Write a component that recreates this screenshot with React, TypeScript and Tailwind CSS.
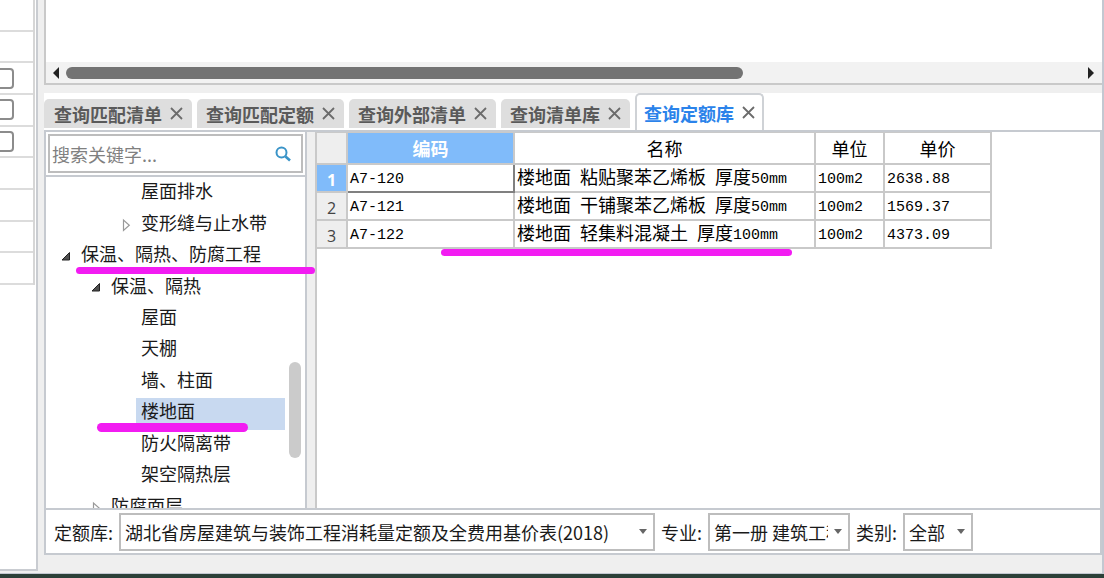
import { useState } from "react";
import clsx from "clsx";

interface TreeNode {
  label: string;
  level: 0 | 1 | 2;
  state?: "open" | "closed";
}

interface QuotaRow {
  code: string;
  name: string;
  unit: string;
  price: string;
}

const TABS = ["查询匹配清单", "查询匹配定额", "查询外部清单", "查询清单库", "查询定额库"];

const TREE: TreeNode[] = [
  { label: "屋面排水", level: 2 },
  { label: "变形缝与止水带", level: 2, state: "closed" },
  { label: "保温、隔热、防腐工程", level: 0, state: "open" },
  { label: "保温、隔热", level: 1, state: "open" },
  { label: "屋面", level: 2 },
  { label: "天棚", level: 2 },
  { label: "墙、柱面", level: 2 },
  { label: "楼地面", level: 2 },
  { label: "防火隔离带", level: 2 },
  { label: "架空隔热层", level: 2 },
  { label: "防腐面层", level: 1, state: "closed" },
];

const ROWS: QuotaRow[] = [
  { code: "A7-120", name: "楼地面 粘贴聚苯乙烯板 厚度50mm", unit: "100m2", price: "2638.88" },
  { code: "A7-121", name: "楼地面 干铺聚苯乙烯板 厚度50mm", unit: "100m2", price: "1569.37" },
  { code: "A7-122", name: "楼地面 轻集料混凝土 厚度100mm", unit: "100m2", price: "4373.09" },
];

const INDENT = { 0: "pl-[14px]", 1: "pl-[44px]", 2: "pl-[74px]" };

// Latin runs are set in a half-width face, so two of them take one Chinese cell
function GridText({ text }: { text: string }) {
  return (
    <>
      {text.split(/([\x20-\x7e]+)/).map((part, i) =>
        i % 2 === 1 ? (
          <span key={i} className="align-middle font-['Liberation_Mono',monospace] text-[15px] leading-none">
            {part}
          </span>
        ) : (
          part
        ),
      )}
    </>
  );
}

function CloseIcon() {
  return (
    <svg viewBox="0 0 13 13" className="h-[13px] w-[13px]" fill="none" stroke="#6b6b6b" strokeWidth="1.8">
      <path d="M1 1 12 12M12 1 1 12" />
    </svg>
  );
}

function TreeArrow({ state }: { state?: "open" | "closed" }) {
  return (
    <svg viewBox="0 0 12 14" className="h-[14px] w-3 shrink-0">
      {state === "open" && <path d="M9.5 2.5V10H2z" fill="#505050" stroke="#222" strokeWidth="1" />}
      {state === "closed" && <path d="M3.5 2v10.5L9.3 7.2z" fill="#fff" stroke="#999" strokeWidth="1.2" />}
    </svg>
  );
}

function Sidebar() {
  return (
    <aside className="mb-[2px] w-[38px] shrink-0 border-b-2 border-r-2 border-[#c9ccd1] bg-white">
      <div className="grid h-[285px] w-[35px] grid-rows-9 border-r-2 border-[#d6d6d6]">
        {Array.from({ length: 9 }, (_, i) => (
          <div key={i} className="flex items-center overflow-hidden border-b-2 border-[#dcdcdc]">
            {i >= 2 && i <= 4 && (
              <input
                type="checkbox"
                aria-label={`第${i + 1}行`}
                className="-ml-2 h-[21px] w-[22px] shrink-0 appearance-none rounded border-2 border-[#8c8c8c] bg-white"
              />
            )}
          </div>
        ))}
      </div>
    </aside>
  );
}

function TopGrid() {
  return (
    <section className="flex h-[85px] shrink-0 flex-col justify-end border-b-2 border-l-2 border-[#c9c9c9] bg-white">
      <div className="flex h-[21px] items-center gap-[7px] bg-[#f2f2f2] pl-[7px] pr-2">
        <svg viewBox="0 0 6 12" className="h-3 w-[6px]">
          <path d="M6 0v12L0 6z" fill="#222" />
        </svg>
        <div className="flex-1">
          <div className="h-3 w-2/3 rounded-full bg-[#737373]" />
        </div>
        <svg viewBox="0 0 6 12" className="h-3 w-[6px]">
          <path d="M0 0v12l6-6z" fill="#222" />
        </svg>
      </div>
    </section>
  );
}

function TabStrip({ active, onChange }: { active: number; onChange: (i: number) => void }) {
  return (
    <div role="tablist" className="flex h-[37px] shrink-0 items-end gap-[5px] bg-white">
      {TABS.map((tab, i) => (
        <button
          key={tab}
          type="button"
          role="tab"
          aria-selected={i === active}
          onClick={() => onChange(i)}
          className={clsx(
            "flex items-center gap-2 whitespace-nowrap rounded-t-[5px] font-bold first:pl-[10px]",
            i === active
              ? "h-[37px] border-2 border-b-0 border-[#cfd2d6] bg-white px-[7px] text-[#2b83ea]"
              : "mb-[2px] h-[29px] bg-[#dedede] px-[9px] text-[#5a5a5a]",
          )}
        >
          {tab}
          <CloseIcon />
        </button>
      ))}
    </div>
  );
}

function CategoryTree() {
  const [selected, setSelected] = useState("楼地面");

  return (
    <div className="flex w-[261px] shrink-0 flex-col border-r-2 border-[#c6cad0] bg-white">
      <div className="shrink-0 border-b-2 border-[#c6cad0] p-[2px]">
        <div className="flex h-[39px] items-center border-2 border-[#bdbdbd] pl-[2px] pr-[10px]">
          <input
            type="text"
            aria-label="搜索关键字"
            placeholder="搜索关键字..."
            className="min-w-0 flex-1 bg-transparent outline-none placeholder:text-[#808080]"
          />
          <svg viewBox="0 0 16 16" className="h-4 w-4" fill="none" stroke="#3a94c8">
            <circle cx="6.5" cy="6.5" r="5" strokeWidth="2" />
            <path d="M10.5 10.5 15 14.5" strokeWidth="2.6" />
          </svg>
        </div>
      </div>
      <div className="flex min-h-0 flex-1 overflow-hidden pt-px">
        <ul className="grid h-[346px] flex-1 grid-rows-11">
          {TREE.map((node) => (
            <li key={node.label} className={clsx("flex items-center", INDENT[node.level])}>
              <TreeArrow state={node.state} />
              <button
                type="button"
                onClick={() => setSelected(node.label)}
                className={clsx(
                  "ml-1 flex h-full flex-1 items-center whitespace-nowrap pb-[7px] pl-[5px]",
                  selected === node.label && "bg-[#c8d9f0]",
                )}
              >
                {node.label}
              </button>
            </li>
          ))}
        </ul>
        <div className="flex w-5 shrink-0 justify-center">
          <div className="mt-[184px] h-24 w-3 rounded-full bg-[#cbcbcb]" />
        </div>
      </div>
    </div>
  );
}

function QuotaTable() {
  const line = "border-2 border-[#c9c9c9]";
  const cell = "border-2 border-[#c9c9c9] p-0 pb-1 pl-[2px] whitespace-nowrap";

  return (
    <div className="min-w-0 flex-1 overflow-hidden border-l-2 border-[#c9c9c9] bg-white">
      <table className="-ml-[2px] -mt-px w-[676px] table-fixed border-collapse leading-[22px] text-black">
        <colgroup>
          <col className="w-[31px]" />
          <col className="w-[167px]" />
          <col className="w-[301px]" />
          <col className="w-[69px]" />
          <col className="w-[107px]" />
        </colgroup>
        <thead>
          <tr className="h-8">
            <th className={clsx(line, "bg-[#eee]")} />
            <th className={clsx(line, "bg-[#80bbfa] p-0 font-bold text-white")}>编码</th>
            <th className={clsx(line, "p-0 font-normal")}>名称</th>
            <th className={clsx(line, "p-0 font-normal")}>单位</th>
            <th className={clsx(line, "p-0 font-normal")}>单价</th>
          </tr>
        </thead>
        <tbody className="leading-5">
          {ROWS.map((row, i) => (
            <tr key={row.code} className="h-[28px]">
              <th
                className={clsx(
                  line,
                  "p-0 align-bottom font-['Open_Sans',sans-serif] text-base leading-[22px]",
                  i === 0 ? "bg-[#80bbfa] font-bold text-white" : "bg-[#eee] font-normal text-[#444]",
                )}
              >
                {i + 1}
              </th>
              <td className={clsx(cell, i === 0 && "border-b-[#808080] border-r-[#808080]")}>
                <GridText text={row.code} />
              </td>
              <td className={cell}>
                <GridText text={row.name} />
              </td>
              <td className={cell}>
                <GridText text={row.unit} />
              </td>
              <td className={cell}>
                <GridText text={row.price} />
              </td>
            </tr>
          ))}
        </tbody>
      </table>
    </div>
  );
}

function FilterSelect({ id, label, value, width }: { id: string; label: string; value: string; width: string }) {
  return (
    <div className="flex items-center gap-[6px]">
      <label htmlFor={id}>{label}</label>
      <div className={clsx("relative flex items-center", width)}>
        <select
          id={id}
          className="h-[38px] w-full appearance-none border-2 border-[#bdbdbd] bg-white pl-1 pr-5 outline-none"
        >
          <option>{value}</option>
        </select>
        <svg viewBox="0 0 8 5" className="pointer-events-none absolute right-2 h-[5px] w-2">
          <path d="M0 0h8L4 5z" fill="#666" />
        </svg>
      </div>
    </div>
  );
}

export default function App() {
  const [active, setActive] = useState(4);

  return (
    <div className="relative flex h-screen flex-col overflow-hidden bg-[#efefef] font-['Noto_Sans_CJK_SC',sans-serif] text-[18px] leading-6 text-[#1a1a1a]">
      <div className="flex min-h-0 flex-1">
        <Sidebar />
        <main className="ml-[6px] flex min-w-0 flex-1 flex-col border-r-2 border-[#c3c8d1]">
          <TopGrid />
          <div className="h-2 shrink-0" />
          <TabStrip active={active} onChange={setActive} />
          <section className="flex min-h-0 flex-1 flex-col border-2 border-[#c6cad0]">
            <div className="flex min-h-0 flex-1 gap-2">
              <CategoryTree />
              <QuotaTable />
            </div>
            <div className="flex h-[45px] shrink-0 items-center gap-[6px] border-t-2 border-[#c6cad0] bg-white pl-2">
              <FilterSelect
                id="library"
                label="定额库:"
                value="湖北省房屋建筑与装饰工程消耗量定额及全费用基价表(2018)"
                width="w-[536px]"
              />
              <FilterSelect id="major" label="专业:" value="第一册 建筑工程" width="w-[142px]" />
              <FilterSelect id="category" label="类别:" value="全部" width="w-[70px]" />
            </div>
          </section>
          <div className="h-[18px] shrink-0" />
        </main>
      </div>
      <footer className="h-[5px] shrink-0 border-t border-[#c3c8d1] bg-[#2c4038]" />

      {/* highlighter strokes */}
      <div className="pointer-events-none absolute left-[76px] top-[267px] h-[7px] w-[239px] rounded-full bg-[#f21cf2]" />
      <div className="pointer-events-none absolute left-[97px] top-[423px] h-[9px] w-[151px] rounded-full bg-[#f21cf2]" />
      <div className="pointer-events-none absolute left-[441px] top-[249px] h-[7px] w-[351px] rounded-full bg-[#f21cf2]" />
    </div>
  );
}
